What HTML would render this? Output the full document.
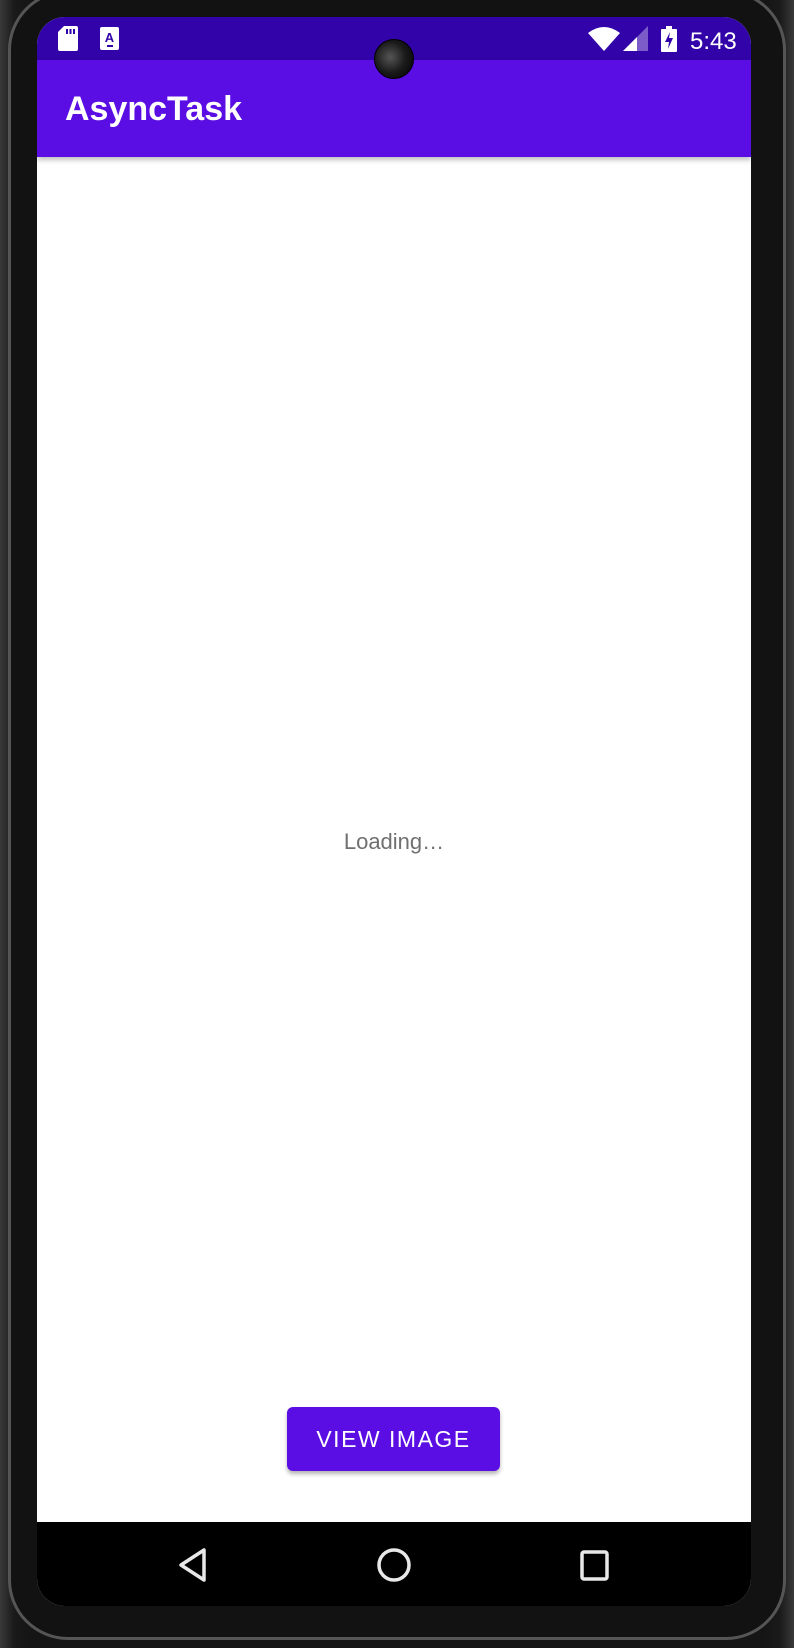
<!DOCTYPE html>
<html><head><meta charset="utf-8"><style>
html,body{margin:0;padding:0;width:794px;height:1648px;overflow:hidden;background:#2a2a2a;}
.phone{position:absolute;left:0;top:0;width:794px;height:1648px;background:linear-gradient(90deg,#3a3a3a 0,#1a1a1a 14px,#151515 30px,#151515 764px,#1a1a1a 780px,#3a3a3a 794px);}
.bez{position:absolute;left:8px;top:-10px;width:778px;height:1650px;border-radius:60px;border:3px solid #555;box-sizing:border-box;background:#121212;}
.screen{position:absolute;left:37px;top:17px;width:714px;height:1589px;border-radius:28px;overflow:hidden;background:#fff;}
.status{position:absolute;left:0;top:0;width:714px;height:43px;background:#3203a8;}
.appbar{position:absolute;left:0;top:43px;width:714px;height:97px;background:#5a0ee3;box-shadow:0 3px 5px rgba(0,0,0,.25);}
.title{position:absolute;left:28px;top:30px;font:bold 34px "Liberation Sans",sans-serif;color:#fff;}
.time{position:absolute;left:653px;top:11px;font:24px "Liberation Sans",sans-serif;color:#fff;}
.cam{position:absolute;left:374px;top:39px;width:38px;height:38px;border-radius:50%;background:radial-gradient(circle at 40% 45%,#555 0,#1a1a1a 50%,#000 100%);border:1px solid #000;}
.loading{position:absolute;left:0;width:714px;top:812px;text-align:center;font:22px "Liberation Sans",sans-serif;color:#707070;}
.btn{position:absolute;left:250px;top:1390px;width:213px;height:64px;background:#5a0ee3;border-radius:6px;box-shadow:0 3px 4px rgba(0,0,0,.3);color:#fff;font:23px "Liberation Sans",sans-serif;letter-spacing:1.5px;text-align:center;line-height:64px;}
.nav{position:absolute;left:0;top:1505px;width:714px;height:84px;background:#000;}
</style></head><body>
<div class="phone"><div class="bez"></div>
<div class="screen">
 <div class="status">
  <svg style="position:absolute;left:21px;top:9px" width="20" height="25" viewBox="0 0 20 25"><path d="M6 0H18a2 2 0 0 1 2 2V23a2 2 0 0 1-2 2H2a2 2 0 0 1-2-2V6Z" fill="#fff"/><rect x="8" y="3" width="2" height="5" fill="#3203a8"/><rect x="11.5" y="3" width="2" height="5" fill="#3203a8"/><rect x="15" y="3" width="2" height="5" fill="#3203a8"/></svg>
  <svg style="position:absolute;left:63px;top:10px" width="19" height="23" viewBox="0 0 19 23"><rect width="19" height="23" rx="2" fill="#fff"/><text x="9.5" y="15" font-family="Liberation Sans" font-weight="bold" font-size="13" text-anchor="middle" fill="#3203a8">A</text><rect x="7" y="18" width="6" height="2" fill="#3203a8"/></svg>
  <svg style="position:absolute;left:551px;top:10px" width="32" height="24" viewBox="0 0 32 24"><path d="M0 6Q16 -6 32 6L16 24Z" fill="#fff"/></svg>
  <svg style="position:absolute;left:586px;top:9px" width="25" height="25" viewBox="0 0 25 25"><path d="M25 0V25H0Z" fill="#7c5cc8"/><path d="M14 11V25H0Z" fill="#fff"/></svg>
  <svg style="position:absolute;left:624px;top:9px" width="16" height="26" viewBox="0 0 16 26"><rect x="0" y="3" width="16" height="23" rx="1" fill="#fff"/><rect x="5" y="0" width="6" height="4" fill="#fff"/><path d="M9 6L4 16H8L7 23L12 12H8Z" fill="#3203a8"/></svg>
  <div class="time">5:43</div>
 </div>
 <div class="appbar"><div class="title">AsyncTask</div></div>
 <div class="loading">Loading…</div>
 <div class="btn">VIEW IMAGE</div>
 <div class="nav">
  <svg style="position:absolute;left:140px;top:25px" width="32" height="36" viewBox="0 0 32 36"><path d="M27 3V33L4 18Z" fill="none" stroke="#e8e8e8" stroke-width="3.5" stroke-linejoin="round"/></svg>
  <svg style="position:absolute;left:337px;top:25px" width="40" height="36" viewBox="0 0 40 36"><circle cx="20" cy="18" r="15" fill="none" stroke="#e8e8e8" stroke-width="3.5"/></svg>
  <svg style="position:absolute;left:542px;top:27px" width="32" height="34" viewBox="0 0 32 34"><rect x="3" y="3" width="25" height="27" rx="2" fill="none" stroke="#e8e8e8" stroke-width="3.5"/></svg>
 </div>
</div>
<div class="cam"></div>
</div>
</body></html>
